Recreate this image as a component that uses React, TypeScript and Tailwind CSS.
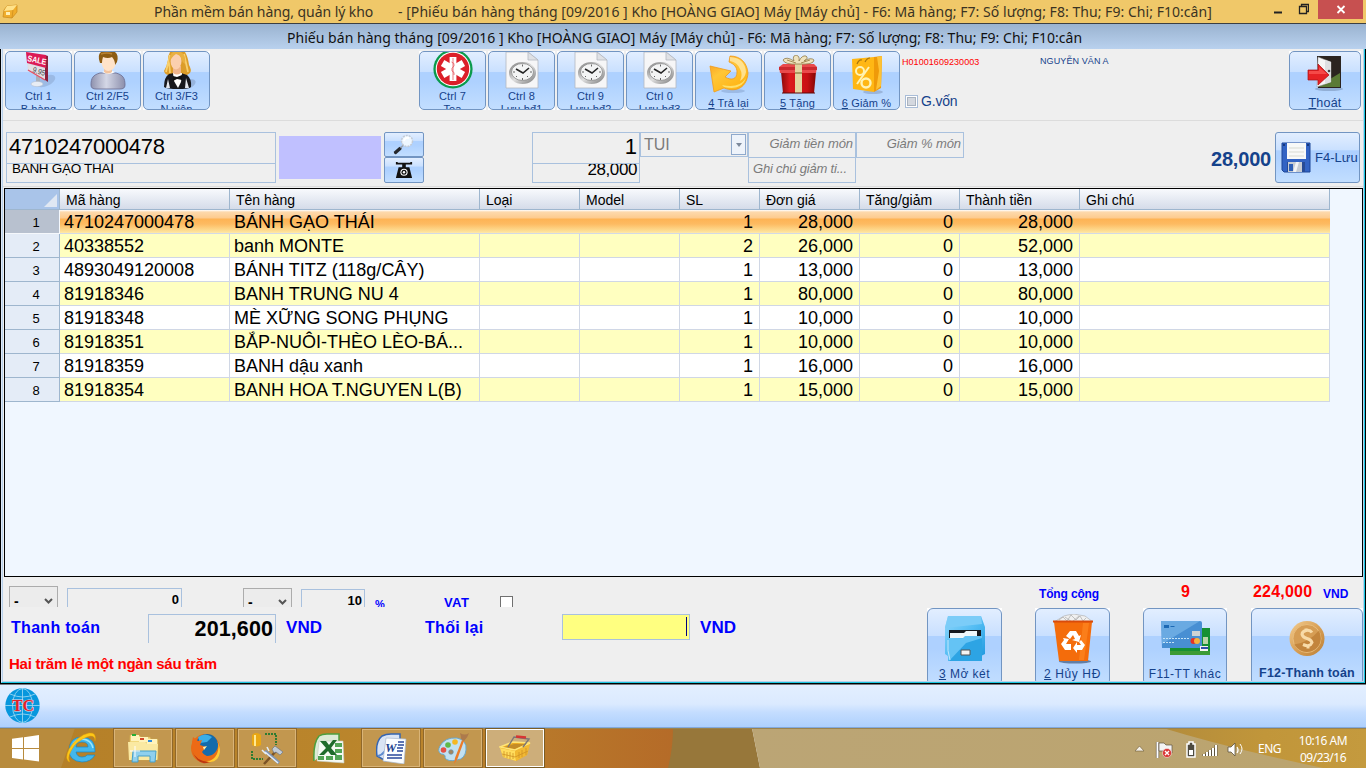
import type { ReactNode } from "react";

type Kids = { children?: ReactNode };

/* ---------- toolbar icons ---------- */

const SaleIcon = () => (
  <svg width="40" height="38" viewBox="0 0 40 38" className="block shrink-0">
    <ellipse cx="27" cy="29" rx="10" ry="5" fill="#7f98bd" opacity=".4" transform="rotate(-25 27 29)" />
    <path d="M17 21h4v11h-4z" fill="#a9b0ba" />
    <ellipse cx="18" cy="32" rx="6" ry="2.600" fill="#e8edf4" stroke="#b7c1d0" strokeWidth=".6" />
    <path d="M7 0l21 4v25L9 19z" fill="#dadde2" />
    <path d="M26 3l3 1v26l-3-2z" fill="#8c1f3c" />
    <path d="M7 0l20 3v13L8 11z" fill="#dc1a55" />
    <text x="8" y="9" fontSize="8.500" fontWeight="bold" fill="#fff" fontFamily="Liberation Sans" textLength="19" lengthAdjust="spacingAndGlyphs" transform="rotate(12 8 9)">SALE</text>
    <path d="M9 12l17 5v11L10 19z" fill="#e3dfe4" />
    <text x="13" y="20" fontSize="8" fill="#444" fontFamily="Liberation Sans" textLength="13" lengthAdjust="spacingAndGlyphs" transform="rotate(18 13 20)">9.95</text>
    <path d="M9 18l17 10" stroke="#e34d63" strokeWidth="1.400" />
  </svg>
);

const CustomerIcon = () => (
  <svg width="40" height="38" viewBox="0 0 40 38" className="block shrink-0">
    <defs>
      <linearGradient id="cust" x1="0" x2="1"><stop offset="0" stopColor="#8f92ae" /><stop offset=".45" stopColor="#d4d7e6" /><stop offset="1" stopColor="#8c8fac" /></linearGradient>
    </defs>
    <path d="M3 33c0-7 2-10 9-12h16c7 2 9 5 9 12 0 3-2 4-5 4H8c-3 0-5-1-5-4z" fill="url(#cust)" stroke="#6f7396" strokeWidth=".9" />
    <path d="M14 20q7-3 13 0-6 4-13 0z" fill="#fff" />
    <path d="M16 15h8v5q-4 3-8 0z" fill="#f2c39e" />
    <path d="M13 5q0-5 7-5t8 5q1 8-3 12-5 4-9 0-3-4-3-12z" fill="#ffe3c9" />
    <path d="M12 11Q9 3 13 0h14q4 3 2 10l-2 3q0-5-3-8-4 2-9 0-1 3-1 6z" fill="#8d5c13" />
    <path d="M13 2q6-2 11 0" stroke="#b98232" strokeWidth="1.500" fill="none" />
  </svg>
);

const StaffIcon = () => (
  <svg width="40" height="38" viewBox="0 0 40 38" className="block shrink-0">
    <ellipse cx="32" cy="32" rx="7" ry="4" fill="#7f98bd" opacity=".5" transform="rotate(-25 32 32)" />
    <path d="M13 0h15q3 5 4 13 3 5 1 8-3 3-8 2H12q-4 0-5-4 3-5 4-11 0-5 2-8z" fill="#dc9d2a" />
    <path d="M13 3l-4 17M27 2l4 18M12 9l1 12" stroke="#f8cf6c" strokeWidth="1.800" fill="none" />
    <path d="M7 35q0-10 5-13l5-1h7l6 2q5 4 4 12-2 2-13 2T7 35z" fill="#17181d" />
    <path d="M16 21h9l-1 9-3 6-4-7z" fill="#fff" />
    <path d="M16 24l4 1 5-2v5l-5-1-4 2z" fill="#111" />
    <path d="M11 27l-2 9h4zM29 26l3 10h-4z" fill="#e5e8ee" />
    <path d="M16 14h8v7q-4 3-8 0z" fill="#efb58c" />
    <ellipse cx="19" cy="9" rx="5.500" ry="8.500" fill="#fbcfae" />
    <path d="M12 12q0-10 4-12h8q5 3 4 12-3-2-4-6-1-3-5-4-5 3-7 10z" fill="#e9b040" />
  </svg>
);

const MedIcon = () => (
  <svg width="40" height="38" viewBox="0 0 40 38" className="block shrink-0">
    <circle cx="20" cy="17" r="19.600" fill="#0a9a4c" />
    <circle cx="20" cy="17" r="17.300" fill="#fff" />
    <circle cx="20" cy="17" r="16.200" fill="#dc1f29" />
    <g fill="#fff">
      <rect x="16.600" y="5" width="6.800" height="24" />
      <rect x="16.600" y="5" width="6.800" height="24" transform="rotate(60 20 17)" />
      <rect x="16.600" y="5" width="6.800" height="24" transform="rotate(120 20 17)" />
    </g>
    <path d="M20 6v22M18.500 10q3.500 1 2.500 4-3 2-2 5 3 1 2 4" stroke="#e2434c" strokeWidth=".7" fill="none" />
  </svg>
);

const ClockDocIcon = () => (
  <svg width="40" height="38" viewBox="0 0 40 38" className="block shrink-0">
    <defs>
      <linearGradient id="cd" x1="0" x2="1" y2="1"><stop offset="0" stopColor="#777" /><stop offset=".5" stopColor="#dedede" /><stop offset="1" stopColor="#777" /></linearGradient>
    </defs>
    <path d="M4 0h22l10 8v28H4z" fill="#f6f6f7" stroke="#b4b9c1" strokeWidth=".8" />
    <path d="M26 0v8h10z" fill="#dfe1e5" stroke="#b4b9c1" strokeWidth=".8" />
    <ellipse cx="20.500" cy="21" rx="13.500" ry="11" fill="url(#cd)" />
    <ellipse cx="20.500" cy="20" rx="11" ry="8.500" fill="#f3f4f4" stroke="#8b8b8b" strokeWidth=".8" />
    <path d="M14 17l7 4 6-5" stroke="#252525" strokeWidth="1.600" fill="none" />
    <path d="M20.500 12.500v2M20.500 26v2M11 20h2M28 20h2M14 25l1-1M26 25l-1-1" stroke="#666" />
  </svg>
);

const ReturnIcon = () => (
  <svg width="42" height="40" viewBox="0 0 42 40" className="block shrink-0">
    <defs>
      <linearGradient id="ret" x1="0" x2=".7" y1="0" y2="1"><stop offset="0" stopColor="#f7941d" /><stop offset=".45" stopColor="#ffc637" /><stop offset="1" stopColor="#ffb310" /></linearGradient>
    </defs>
    <ellipse cx="25" cy="36" rx="12" ry="2" fill="#7794bd" opacity=".4" />
    <path d="M2 11l21 5-6 6c7 4 12 2 12-5 0-5-3-8-8-10l1-6c11 0 17 7 18 17-1 14-11 20-24 15l-10 4z" fill="url(#ret)" stroke="#f19b19" strokeWidth=".8" />
    <path d="M22 2q15 1 16 15-1 6-6 9 3-7 0-12-3-7-10-8z" fill="#fff0b9" opacity=".7" />
    <path d="M14 30q17 4 24-7-4 13-22 9z" fill="#ffe06a" />
  </svg>
);

const GiftIcon = () => (
  <svg width="42" height="40" viewBox="0 0 42 40" className="block shrink-0">
    <defs>
      <linearGradient id="gf" x1="0" x2="1"><stop offset="0" stopColor="#8c0909" /><stop offset=".25" stopColor="#dc1a1d" /><stop offset=".75" stopColor="#c91014" /><stop offset="1" stopColor="#820606" /></linearGradient>
    </defs>
    <path d="M4 17h35l-2 21H6z" fill="url(#gf)" />
    <path d="M2 12l4-3h31l3 3-1 6H3z" fill="#e94a4b" />
    <path d="M2 12h38v3H2z" fill="#cc2a2f" />
    <path d="M18 9h7v29h-7z" fill="#e3d5a0" />
    <path d="M18 17h7v2h-7z" fill="#a99a61" />
    <path d="M21 9Q8 10 6 5q3-4 11 1-2-5 2-6 4 1 3 6 3-6 7-5 3 2-2 5 7-4 10-1 0 5-16 4z" fill="#efe3bd" stroke="#8f7846" strokeWidth=".8" />
    <path d="M10 5l9 3M33 5l-9 3" stroke="#a58d55" />
    <path d="M5 38h33" stroke="#5e0909" />
  </svg>
);

const DiscountIcon = () => (
  <svg width="36" height="40" viewBox="0 0 36 40" className="block shrink-0">
    <ellipse cx="24" cy="37" rx="10" ry="2" fill="#66789a" opacity=".35" />
    <path d="M3 4l22-2v35L4 34z" fill="#ffb714" />
    <path d="M25 2l8-1-1 32-7 4z" fill="#ef9a09" />
    <path d="M28 2l2 14-3 19 5-4 1-30z" fill="#fec234" />
    <path d="M8 9q2-5 5-4M16 7q2-4 5-4" stroke="#a6740f" fill="none" strokeWidth="1.200" />
    <path d="M8 29L20 12" stroke="#fff3b5" strokeWidth="2" />
    <circle cx="11" cy="16" r="4" stroke="#fff3b5" strokeWidth="2" fill="none" />
    <circle cx="17" cy="28" r="4.500" stroke="#fff3b5" strokeWidth="2.400" fill="none" />
  </svg>
);

const ExitIcon = () => (
  <svg width="36" height="36" viewBox="0 0 36 36" className="block shrink-0">
    <ellipse cx="22" cy="33" rx="14" ry="2" fill="#5f7699" opacity=".4" />
    <path d="M10 0h24v32H11z" fill="#2b2420" />
    <path d="M23 23l10-6v14H12z" fill="#5a7a35" />
    <path d="M11 1l13 5v20l-14 5z" fill="#f5f5f5" stroke="#999" strokeWidth=".5" />
    <path d="M18 4l6 2v20l-6 2z" fill="#dedfe2" />
    <circle cx="22" cy="15" r="1.300" fill="#444" />
    <path d="M1 14h10V8l11 11-11 10v-5H1z" fill="#e62225" stroke="#a80e14" strokeWidth=".7" />
    <path d="M2 15h10v-4l8 7H2z" fill="#ff6460" opacity=".6" />
  </svg>
);

const MagnifierIcon = () => (
  <svg width="24" height="22" viewBox="0 0 24 22" className="block shrink-0">
    <path d="M3.500 18.500l4.500-4" stroke="#25282c" strokeWidth="3.200" strokeLinecap="round" />
    <path d="M8.500 14l3-3" stroke="#9aa2ad" strokeWidth="1.600" />
    <circle cx="15" cy="7" r="5.500" fill="#eef7ff" stroke="#c3cbd6" strokeWidth="1.500" strokeDasharray="2 1" />
    <path d="M12 7q1-4 5-3" stroke="#fff" strokeWidth="2" fill="none" />
  </svg>
);

const ScaleIcon = () => (
  <svg width="18" height="18" viewBox="0 0 20 20" className="block shrink-0">
    <path d="M1 1h2v1h14V1h2v3h-7v3h4l3 12H1L4 7h4V4H1z" fill="#111" />
    <circle cx="10" cy="12.500" r="4" fill="#fff" />
    <circle cx="10" cy="12.500" r="2.800" fill="#111" />
    <circle cx="10" cy="12.500" r="1.300" fill="#fff" />
  </svg>
);

const FloppyIcon = () => (
  <svg width="30" height="31" viewBox="0 0 30 31" className="block shrink-0">
    <path d="M1 1h28v29H3l-2-2z" fill="#3263c4" stroke="#1d4798" />
    <path d="M6 1h19v16H6z" fill="#f8f9f8" />
    <path d="M8 6h15M8 10h15M8 14h15" stroke="#d9dbd3" />
    <path d="M6 20h18v10H6z" fill="#274b96" />
    <path d="M7 20h14v10H7z" fill="#c7ccd3" />
    <path d="M8 22h4v7H8z" fill="#2e5fb7" />
    <path d="M15 20h3l-3 10h-3z" fill="#f3f4f6" />
    <path d="M2 3h2M26 3h2" stroke="#16387f" strokeWidth="2" />
  </svg>
);

/* ---------- payment icons ---------- */

const SafeIcon = () => (
  <svg width="42" height="47" viewBox="0 0 42 47" className="block shrink-0">
    <defs>
      <linearGradient id="sf" x1="0" x2="1" y2="1"><stop offset="0" stopColor="#8fd6fb" /><stop offset=".5" stopColor="#52bcf3" /><stop offset="1" stopColor="#1d97de" /></linearGradient>
    </defs>
    <path d="M4 1h33l4 11v27l-4 2v5H4v-5l-3-2V12z" fill="url(#sf)" />
    <path d="M4 1h33l1 8-37 4z" fill="#7bccf8" />
    <path d="M5 15h32v8H5z" fill="#151a20" />
    <path d="M6 18h14l2-2h11v7H6z" fill="#edf7fc" />
    <path d="M3 24h15l3-3h17v25H5q-3-9-2-22z" fill="#64c3f5" />
    <path d="M5 46l17-18 16-5v23z" fill="#2da4e4" />
    <path d="M4 25q-1 11 2 20" stroke="#bfe7fd" fill="none" />
    <path d="M17 35h9v5h-9z" fill="#f5f5f4" stroke="#555" />
  </svg>
);

const TrashIcon = () => (
  <svg width="42" height="50" viewBox="0 0 42 50" className="block shrink-0">
    <ellipse cx="23" cy="47.500" rx="16" ry="2" fill="#40587d" opacity=".7" />
    <path d="M2 8l5-3 5-3 4-1 6-1 5 1 6 1 4 3 4 3z" fill="#f0f0f0" stroke="#aaa" strokeWidth=".6" />
    <path d="M7 6l4-3 4 4 4-6 5 5 4-4 3 5 3-3M13 3l7 5 7-6" stroke="#a9a9a9" strokeWidth=".7" fill="none" />
    <path d="M2 8h38l-4 39H7z" fill="#f46c0b" />
    <path d="M1 6.500h40v2H1z" fill="#d94b0b" />
    <path d="M31 9h6l-5 37h-5z" fill="#ff8b24" opacity=".6" />
    <g fill="#fff" transform="translate(0 1)">
      <path d="M14 21l4-5h6l3 5 2-1-2 7-7-2 3-1-2-4-3 4z" />
      <path d="M11 23l6 1-3 5h5v6h-6l-4-6 3-4z" />
      <path d="M29 25l4 5-3 5h-5v3l-4-5 4-6v3h4l-2-3z" />
    </g>
  </svg>
);

const CardsIcon = () => (
  <svg width="50" height="37" viewBox="0 0 50 37" className="block shrink-0">
    <path d="M10 8h40v27H10z" fill="#169033" />
    <path d="M10 31h40v4H10z" fill="#3c9b35" />
    <path d="M1 1h39q2 0 2 2v23q0 2-2 2H2z" fill="#488fd3" />
    <path d="M1 1h39L2 24z" fill="#7db9e9" opacity=".65" />
    <path d="M4 5h5v3H4zM10.500 6h4v1h-4z" fill="#1d69b4" />
    <path d="M3 18.500h27M3 22.500h12" stroke="#c5e3f7" strokeDasharray="2 1" />
    <path d="M32 11h8v5h-8z" fill="#cfd3d3" />
    <circle cx="33.500" cy="21" r="3" fill="#e33227" /><circle cx="37" cy="21" r="3" fill="#f7b13e" />
    <path d="M43 17h5v7h-5z" fill="#b9d5a7" />
    <path d="M40 26h8v5h-8z" fill="#f5f5f1" /><path d="M41 27h7v2h-7z" fill="#3050aa" />
  </svg>
);

const CoinIcon = () => (
  <svg width="36" height="37" viewBox="0 0 36 36" className="block shrink-0">
    <defs>
      <linearGradient id="coin" x1="0" x2="1" y2="1"><stop offset="0" stopColor="#f3cd90" /><stop offset=".5" stopColor="#d9a056" /><stop offset="1" stopColor="#bb7f35" /></linearGradient>
    </defs>
    <circle cx="18" cy="18" r="17.500" fill="url(#coin)" />
    <circle cx="18" cy="18" r="14" fill="#d69d54" stroke="#ecc384" strokeWidth=".8" />
    <path d="M5 24Q20 22 30 10q5 12-4 19-12 7-21-5z" fill="#bc7e34" opacity=".75" />
    <path d="M23 12q-2-3-6-2-4 1-4 4 1 3 5 4t5 4q-2 5-9 2M17 8v3M19 25v3" stroke="#f8dba8" strokeWidth="3" fill="none" />
  </svg>
);

const GlobeLogo = () => (
  <svg width="35" height="35" viewBox="0 0 35 35" className="block">
    <circle cx="17.500" cy="17.500" r="17.200" fill="#0797dd" />
    <g stroke="#a6ddf5" strokeWidth=".8" fill="none">
      <ellipse cx="17.500" cy="17.500" rx="10" ry="17" />
      <path d="M17.500 0v35M5 6q13 6 25 0M5 29q13-6 25 0M0 17.500h35" />
    </g>
    <text x="7" y="23" fontSize="16" fontWeight="bold" fontFamily="Liberation Serif" fill="#e32028" stroke="#ead8e4" strokeWidth="1" paintOrder="stroke" textLength="22">TC</text>
  </svg>
);

/* ---------- taskbar icons ---------- */

const WindowsIcon = () => (
  <svg width="28" height="27" viewBox="0 0 28 27" className="block" fill="#fff">
    <path d="M0 3.800l11-1.500V13H0zM12 2.200L27 0v13H12zM0 14h11v10.500L0 23zM12 14h15v12.500L12 24.600z" />
  </svg>
);

const IeIcon = () => (
  <svg width="32" height="32" viewBox="0 0 32 32" className="block">
    <path d="M10 15h12q0-5-6-5t-6 5zm0 5q1 5 6 5 4 0 5-2h8q-4 7-13 7Q3 29 3 18 4 5 16 5q14 1 13 15z" fill="#43b7ec" stroke="#1887c5" strokeWidth=".7" />
    <path d="M6 14Q9 7 17 7q8 1 10 9" stroke="#9ce7fc" strokeWidth="1.500" fill="none" />
    <path d="M4 30Q-2 28 3 17 12 3 23 1q8-1 6 8 0-7-8-4Q10 9 5 19q-4 7-1 11z" fill="#ffc817" stroke="#da9b08" strokeWidth=".5" />
  </svg>
);

const ExplorerIcon = () => (
  <svg width="32" height="30" viewBox="0 0 32 30" className="block">
    <path d="M3 2h9l2 2h9l1 2h7v21H2z" fill="#f1d87c" stroke="#caa44b" strokeWidth=".7" />
    <path d="M4 2h8v6H4zM12 4h9v5h-9zM20 6h10v5H20z" fill="#fff3bb" />
    <path d="M5 1h4v2H5z" fill="#27ad35" /><path d="M13 5h4v2h-4z" fill="#d54a2b" /><path d="M21 7h4v2h-4z" fill="#2f8bdc" />
    <path d="M1 9h17l2 2h11l-1 16H2z" fill="#fae9a2" />
    <path d="M5 29l1-11h23l-1 11h-5v-6H11v6z" fill="#8fd0ee" stroke="#479fc8" />
    <path d="M8 13v11M3 18h10" stroke="#fff" />
  </svg>
);

const FirefoxIcon = () => (
  <svg width="31" height="31" viewBox="0 0 31 31" className="block">
    <circle cx="15.500" cy="15.500" r="14.500" fill="#e86d17" />
    <circle cx="17" cy="12" r="11" fill="#146bab" />
    <path d="M8 4q7-5 14 0l-5 5-7 1z" fill="#39aee8" />
    <path d="M2 9l1-5 5 4 4-1-2 5 6 2-4 5q3 5 9 4-5 6-13 1-7-7-6-15z" fill="#ed6a16" />
    <path d="M27 8q3 5 0 13-4 8-12 7 13 4 15-9 0-7-3-11z" fill="#ffcb35" />
    <path d="M2 18q4 10 17 11-10 5-17-11z" fill="#bd3711" />
    <path d="M13 14l4-1-3 4z" fill="#fff1ab" />
  </svg>
);

const DbToolsIcon = () => (
  <svg width="32" height="33" viewBox="0 0 32 33" className="block">
    <path d="M1 3q4-4 9 0v10q-5 3-9 0z" fill="#e9a713" />
    <path d="M4 3v11" stroke="#ffe891" strokeWidth="2" />
    <path d="M14 2h11v11M1 19v8h11" stroke="#2e7c32" strokeWidth="2" fill="none" strokeDasharray="2 1" />
    <path d="M13 32l13-14" stroke="#7b5326" strokeWidth="2.500" />
    <path d="M21 17l3-3 8 6-3 3-4-3-2 1z" fill="#c3cbd4" stroke="#606d80" strokeWidth=".6" />
    <path d="M14 19l14 12" stroke="#7e95b5" strokeWidth="3" /><path d="M11 18l4 4M16 15l2 4M14 20l13 11" stroke="#e5edf6" strokeWidth="1.600" />
  </svg>
);

const ExcelIcon = () => (
  <svg width="32" height="31" viewBox="0 0 32 31" className="block">
    <path d="M1 28Q0 10 6 3q3-2 8-2h12v9" fill="#dcebd5" stroke="#4d9e3c" strokeWidth="1.500" />
    <path d="M6 8h24l1 22-27-2z" fill="#f6faf4" stroke="#c3cbbd" strokeWidth=".6" />
    <path d="M7 8h6l3 4 4-5h4l-6 8 6 7h-6l-3-4-4 4H6l7-7z" fill="#1f6b2b" />
    <path d="M22 10h7v4h-7zM22 16h7v4h-7zM5 23h6v4H5zM13 23h7v4h-7zM22 22h7v5h-7z" fill="#52a455" />
  </svg>
);

const WordIcon = () => (
  <svg width="31" height="31" viewBox="0 0 31 31" className="block">
    <path d="M1 23Q-1 9 6 3q4-2 9-2h9v9L10 28z" fill="#d9e4f4" stroke="#3565b1" strokeWidth="1.500" />
    <path d="M2 23q8-2 10-13" stroke="#5d8bd0" strokeWidth="2" fill="none" />
    <path d="M10 5l20 1-2 25-21-3z" fill="#fafdff" stroke="#a7b7cd" strokeWidth=".7" />
    <path d="M22 9h6M22 12h6M21 15h6M21 18h6M11 22h15M11 25h15" stroke="#29479b" strokeWidth="1.600" />
    <text x="9" y="19" fill="#24448f" fontSize="13" fontWeight="bold" fontStyle="italic" fontFamily="Liberation Serif">W</text>
  </svg>
);

const PaintIcon = () => (
  <svg width="33" height="32" viewBox="0 0 33 32" className="block">
    <path d="M3 14Q8 5 20 6q10 2 9 12-1 9-9 10-9 2-12-2 1-4-4-4-4-3-1-8z" fill="#c2e1f1" stroke="#6ba8ca" />
    <circle cx="6.500" cy="18" r="2.800" fill="#e45145" /><circle cx="11" cy="13" r="2.800" fill="#60b847" /><circle cx="18" cy="10" r="2.800" fill="#f5b823" /><circle cx="14" cy="20" r="2.300" fill="#a28762" stroke="#6a91a7" strokeWidth=".7" />
    <path d="M25 8l2 1-7 19-3 4 1-6z" fill="#ec7c2a" />
    <path d="M23 1q5 3 9 0-1 4-5 8l-3-2q0-3-1-6z" fill="#ad7a4c" />
  </svg>
);

const BasketIcon = ({ size }: { size: number }) => (
  <svg width={size} height={size} viewBox="0 0 32 28" className="block">
    <path d="M1 13l13-5 17 1-3 12-11 6L4 23z" fill="#eba921" />
    <path d="M3 14l12-4 13 0-12 5z" fill="#c48c28" />
    <path d="M1 14l15 3 1 10-13-4z" fill="#ffdc5c" /><path d="M16 17l15-7-3 11-11 6z" fill="#f2b932" />
    <path d="M1 13l13-5 17 1-15 7z" fill="none" stroke="#ffe577" strokeWidth="1.600" />
    <path d="M5 17v6M8 18v6M11 18v7M14 19v6M20 18v6M23 16v7M27 14v7M3 20l13 3 13-6" stroke="#cf9224" strokeWidth=".8" fill="none" />
    <path d="M9 13l6-10 15 2-6 8" fill="none" stroke="#7b7777" strokeWidth="1.400" /><path d="M17 2.500l10 1" stroke="#d63634" strokeWidth="2.500" />
  </svg>
);

const CrateIcon = () => (
  <svg width="16" height="15" viewBox="0 0 16 15" className="block">
    <path d="M5 2l10-1 0 7-5 6-9-1 1-7z" fill="#f0ad2c" stroke="#c98a1d" strokeWidth=".7" />
    <path d="M5 2l10-1-4 5-9 1z" fill="#ffe28a" />
    <path d="M4 8h4v3H4z" fill="#fff0b5" /><path d="M11 6l-1 8" stroke="#cf8f20" strokeWidth=".8" />
  </svg>
);

const Chevron = () => (
  <svg width="9" height="6" viewBox="0 0 9 6" className="block shrink-0"><path d="M1 1l3.500 3.500L8 1" fill="none" stroke="#555" strokeWidth="2" /></svg>
);

/* ---------- building blocks ---------- */

const Face = "border border-[#7295c2] bg-[linear-gradient(180deg,#e2eeff_0%,#c9e0ff_35%,#aed1ff_36%,#aed1ff_52%,#c2deff_100%)] text-[#15428b]";

const ToolButton = ({ icon, first, second }: { icon: ReactNode; first: string; second: string }) => (
  <div className="h-[59px] w-[67px] shrink-0 bg-white">
    <div className={`flex h-full flex-col items-center overflow-hidden rounded-[5px] ${Face}`}>
      {icon}
      <div className="shrink-0 text-center text-[11px] leading-[13px] tracking-[0.1px] whitespace-nowrap">{first}<br />{second}</div>
    </div>
  </div>
);

const AccelButton = ({ icon, accel, label }: { icon: ReactNode; accel: string; label: string }) => (
  <div className="h-[59px] w-[67px] shrink-0 bg-white">
    <div className={`flex h-full flex-col items-center overflow-hidden rounded-[5px] pt-[3px] ${Face}`}>
      {icon}
      <div className="mt-[2px] shrink-0 text-[11px] leading-[13px] tracking-[0.15px] whitespace-nowrap"><u>{accel}</u>{label}</div>
    </div>
  </div>
);

const PayButton = ({ className, children }: Kids & { className: string }) => (
  <div className={`h-[73px] shrink-0 overflow-hidden bg-white ${className}`}>
    <div className={`flex h-[78px] flex-col items-center overflow-hidden rounded-[6px] text-[12px] leading-[14px] whitespace-nowrap ${Face}`}>{children}</div>
  </div>
);

const TaskButton = ({ children, active }: Kids & { active?: boolean }) => (
  <div className={`flex h-[40px] w-[60px] shrink-0 items-center justify-center border ${active ? "border-[#7a5c25]" : "border-[#90682a]"}`}>
    <div className={`flex h-full w-full items-center justify-center border ${active ? "border-white bg-[#cdae7a]" : "border-[#d9b478] bg-[#c2974f]"}`}>{children}</div>
  </div>
);

const GRID = "grid grid-cols-[55px_170px_250px_100px_100px_80px_100px_100px_120px_250px]";
const HEADERS = ["Mã hàng", "Tên hàng", "Loại", "Model", "SL", "Đơn giá", "Tăng/giảm", "Thành tiền", "Ghi chú"];
const ROWS = [
  ["4710247000478", "BÁNH GẠO THÁI", "1", "28,000", "28,000"],
  ["40338552", "banh MONTE", "2", "26,000", "52,000"],
  ["4893049120008", "BÁNH TITZ (118g/CÂY)", "1", "13,000", "13,000"],
  ["81918346", "BANH TRUNG NU 4", "1", "80,000", "80,000"],
  ["81918348", "MÈ XỮNG SONG PHỤNG", "1", "10,000", "10,000"],
  ["81918351", "BẮP-NUÔI-THÈO LÈO-BÁ...", "1", "10,000", "10,000"],
  ["81918359", "BANH dậu xanh", "1", "16,000", "16,000"],
  ["81918354", "BANH HOA T.NGUYEN L(B)", "1", "15,000", "15,000"],
];

const Row = ({ row, index }: { row: string[]; index: number }) => {
  const selected = index === 0;
  const band = selected
    ? "bg-[linear-gradient(180deg,#fff_0px,#fdd9ac_2px,#fdcb8e_8px,#feb354_9px,#fdbb62_14px,#fee39b_22px,#fff0c0_24px)]"
    : index % 2 ? "bg-[#ffffc0]" : "bg-white";
  const cell = `h-[24px] overflow-hidden border-b whitespace-nowrap ${selected ? "border-[#d3dae6]" : "border-r border-[#d0d7e5]"}`;
  const num = `${cell} text-right ${selected ? "pr-[7px]" : "pr-[6px]"}`;
  return (
    <div className={`${GRID} h-[24px] text-[18px] leading-[25px]`}>
      <div className={`h-[24px] border-r border-b text-center text-[13px] leading-[25px] ${selected ? "border-[#f5f8fc] bg-[#b8c1cf]" : "border-[#9eb6ce] bg-[#e4ecf7]"} pr-[5px] pl-[13px]`}>{index + 1}</div>
      <div className={`col-span-9 grid h-[24px] grid-cols-subgrid ${band}`}>
        <div className={`${cell} pl-[4px]`}>{row[0]}</div>
        <div className={`${cell} pl-[4px]`}>{row[1]}</div>
        <div className={cell} />
        <div className={cell} />
        <div className={num}>{row[2]}</div>
        <div className={num}>{row[3]}</div>
        <div className={num}>0</div>
        <div className={num}>{row[4]}</div>
        <div className={cell} />
      </div>
    </div>
  );
};

const TitleBar = () => (
  <header className="flex h-[24px] items-start border-b border-[#3b3f42] bg-[#f0c869] font-['Noto_Sans',sans-serif] text-[#3a3323]">
    <div className="mt-[4px] ml-[2px]"><CrateIcon /></div>
    <div className="ml-[136px] w-[220px] text-[14px] leading-[24px] tracking-[-0.07px] whitespace-nowrap">Phần mềm bán hàng, quản lý kho</div>
    <div className="ml-[24px] w-[815px] text-[14px] leading-[24px] tracking-[0.04px] whitespace-nowrap">- [Phiếu bán hàng tháng [09/2016 ] Kho [HOÀNG GIAO] Máy [Máy chủ] - F6: Mã hàng; F7: Số lượng; F8: Thu; F9: Chi; F10:cân]</div>
    <svg width="36" height="19" viewBox="0 0 36 19" className="ml-[60px] block shrink-0" fill="none" stroke="#222" strokeWidth="2">
      <path d="M1 12.500h8" /><path d="M26.500 6.500h7v7h-7zM28.500 6V4.500h7v7H34" strokeWidth="1.300" />
    </svg>
    <div className="ml-[9px] flex h-[19px] w-[45px] shrink-0 items-center justify-center bg-[#c75050]">
      <svg width="10" height="9" viewBox="0 0 10 9"><path d="M1.500 1l7 7M8.500 1l-7 7" stroke="#fff" strokeWidth="1.800" /></svg>
    </div>
  </header>
);

const Toolbar = () => (
  <div className="flex h-[72px] items-start border-b border-[#dcdcdc] pt-[2px] pl-[2px]">
    <div className="flex gap-[2px]">
      <ToolButton icon={<SaleIcon />} first="Ctrl 1" second="B.hàng" />
      <ToolButton icon={<CustomerIcon />} first="Ctrl 2/F5" second="K.hàng" />
      <ToolButton icon={<StaffIcon />} first="Ctrl 3/F3" second="N.viên" />
    </div>
    <div className="ml-[209px] flex gap-[2px]">
      <ToolButton icon={<MedIcon />} first="Ctrl 7" second="Toa" />
      <ToolButton icon={<ClockDocIcon />} first="Ctrl 8" second="Lưu hđ1" />
      <ToolButton icon={<ClockDocIcon />} first="Ctrl 9" second="Lưu hđ2" />
      <ToolButton icon={<ClockDocIcon />} first="Ctrl 0" second="Lưu hđ3" />
      <AccelButton icon={<ReturnIcon />} accel="4" label=" Trả lại" />
      <AccelButton icon={<GiftIcon />} accel="5" label=" Tặng" />
      <AccelButton icon={<DiscountIcon />} accel="6" label=" Giảm %" />
    </div>
    <div className="ml-[2px] flex w-[138px] flex-col">
      <div className="mt-[5px] text-[9px] leading-[12px] tracking-[0.05px] text-[#f00]">H01001609230003</div>
      <div className="mt-[25px] ml-[3px] flex items-center">
        <div className="h-[13px] w-[13px] border border-[#a9bdd8] bg-white p-px"><div className="h-full w-full border border-[#aab3bf] bg-[#d4d8df]" /></div>
        <span className="ml-[3px] text-[14px] leading-[16px] tracking-[-0.2px] text-[#15428b]">G.vốn</span>
      </div>
    </div>
    <div className="mt-[4px] w-[249px] text-[9px] leading-[12px] tracking-[0.1px] text-[#15428b]">NGUYỄN VĂN A</div>
    <div className="h-[59px] w-[72px] bg-white">
      <div className={`flex h-full flex-col items-center rounded-[5px] pt-[4px] ${Face}`}>
        <ExitIcon />
        <div className="mt-[4px] text-[12.5px] leading-[14px] tracking-[0.2px]"><u>T</u>hoát</div>
      </div>
    </div>
  </div>
);

const box = "border border-[#a9c1de]";

const EntryRow = () => (
  <div className="flex h-[66px] items-start border-b border-[#dcdcdc] pt-[11px] pl-[3px]">
    <div className={`flex h-[51px] w-[270px] flex-col ${box}`}>
      <div className="h-[31px] border-b border-[#a9c1de] pl-[2px] text-[22px] leading-[28px] tracking-[-0.25px]">4710247000478</div>
      <div className="h-[18px] overflow-hidden pl-[5px]"><div className="-mt-[4px] text-[13.5px] leading-[17px] tracking-[-0.3px]">BÁNH GẠO THÁI</div></div>
    </div>
    <div className="mt-[4px] ml-[3px] h-[43px] w-[102px] bg-[#c0c0ff]" />
    <div className="ml-[3px] flex flex-col">
      <div className={`flex h-[25px] w-[40px] items-center justify-center rounded-[2px] ${Face}`}><MagnifierIcon /></div>
      <div className={`flex h-[26px] w-[40px] items-center justify-center rounded-[2px] ${Face}`}><ScaleIcon /></div>
    </div>
    <div className={`ml-[108px] flex h-[51px] w-[108px] flex-col text-right ${box}`}>
      <div className="h-[31px] border-b border-[#a9c1de] pr-[2px] text-[22px] leading-[28px]">1</div>
      <div className="h-[18px] overflow-hidden pr-[2px]"><div className="-mt-[4px] text-[17px] leading-[20px] tracking-[-0.4px]">28,000</div></div>
    </div>
    <div className={`flex h-[25px] w-[108px] items-center justify-between pr-px pl-[3px] ${box}`}>
      <span className="text-[16px] leading-[24px] text-[#7b7b7b]">TUI</span>
      <div className="flex h-[21px] w-[15px] items-center justify-center border border-[#8fa9cc] bg-[#eef3fa]">
        <svg width="6" height="4" viewBox="0 0 6 4"><path d="M0 0h6L3 4z" fill="#7d899b" /></svg>
      </div>
    </div>
    <div className="flex flex-col text-[13px] tracking-[-0.08px] text-[#7b7b7b] italic">
      <div className="flex">
        <div className={`h-[26px] w-[108px] pr-[2px] text-right leading-[22px] ${box}`}>Giảm tiền món</div>
        <div className={`h-[26px] w-[108px] pr-[2px] text-right leading-[22px] ${box}`}>Giảm % món</div>
      </div>
      <div className={`-mt-px h-[26px] w-[108px] pl-[4px] leading-[21px] tracking-[-0.2px] whitespace-nowrap ${box}`}>Ghi chú giảm ti...</div>
    </div>
    <div className="mt-[16px] w-[307px] text-right text-[20px] leading-[23px] font-bold tracking-[-0.2px] text-[#15428b]">28,000</div>
    <div className={`ml-[4px] flex h-[51px] w-[85px] items-center rounded-[3px] pl-[5px] ${Face}`}>
      <FloppyIcon />
      <span className="ml-[4px] pt-px text-[13px] whitespace-nowrap">F4-Lưu</span>
    </div>
  </div>
);

const ItemTable = () => (
  <div className="ml-px h-[389px] w-[1359px] shrink-0 border border-black bg-[#f0f7ff]">
    <div className={`${GRID} h-[21px] text-[14px] leading-[22px]`}>
      <div className="flex h-[21px] items-end justify-end border-r border-b border-[#9eb6ce] bg-[#a9c4e9] p-[2px]">
        <svg width="13" height="13" viewBox="0 0 13 13"><path d="M13 0v13H0z" fill="#e0e8f3" /></svg>
      </div>
      {HEADERS.map((h) => (
        <div key={h} className="h-[21px] border-r border-b border-[#9eb6ce] bg-linear-to-b from-[#f8fafd] to-[#d5dce9] pl-[6px] whitespace-nowrap">{h}</div>
      ))}
    </div>
    {ROWS.map((r, i) => <Row key={r[0]} row={r} index={i} />)}
  </div>
);

const select = "flex w-[49px] justify-between border border-b-0 border-[#acacac] bg-[#ececec] pr-[4px] pl-[4px]";

const Totals = () => (
  <div className="flex h-[104px] shrink-0 justify-between pt-px">
    <div className="flex w-[760px] flex-col">
      <div className="flex h-[29px] items-end overflow-hidden pl-[6px] text-[14px] font-bold">
        <div className={`${select} h-[21px] items-center pt-[7px]`}><span className="leading-[14px]">-</span><Chevron /></div>
        <div className="ml-[9px] h-[19px] w-[115px] border border-b-0 border-[#a9c1de] pr-[2px] text-right text-[13px] leading-[22px]">0</div>
        <div className={`${select} ml-[61px] h-[19px] items-center pt-[8px]`}><span className="leading-[12px]">-</span><Chevron /></div>
        <div className="ml-[9px] h-[18px] w-[64px] border border-b-0 border-[#a9c1de] pr-[2px] text-right text-[13px] leading-[22px]">10</div>
        <div className="ml-[10px] h-[11px] w-[20px] overflow-hidden text-[11px] leading-[16px] text-[#00f]">%</div>
        <div className="ml-[49px] h-[12px] w-[56px] overflow-hidden text-[13px] leading-[15px] tracking-[0.4px] text-[#00f]">VAT</div>
        <div className="h-[11px] w-[13px] border border-b-0 border-[#707070] bg-white" />
      </div>
      <div className="flex h-[43px] items-start pt-[7px] pl-[8px] text-[16px] leading-[27px] font-bold tracking-[0.3px] text-[#00f]">
        <div className="w-[137px]">Thanh toán</div>
        <div className="h-[29px] w-[128px] border border-b-0 border-[#a9c1de] pr-[2px] text-right text-[21.500px] leading-[28px] tracking-[0.1px] text-black">201,600</div>
        <div className="ml-[10px] w-[139px] text-[17px] tracking-[0.1px]">VND</div>
        <div className="w-[137px]">Thối lại</div>
        <div className="flex h-[26px] w-[128px] justify-end border border-[#a9c1de] bg-[#ffff80] py-[2px] pr-[2px]"><div className="h-[19px] w-px bg-[#000080]" /></div>
        <div className="ml-[10px] text-[17px] tracking-[0.1px]">VND</div>
      </div>
      <div className="mt-[4px] pl-[6px] text-[15px] leading-[20px] font-bold tracking-[-0.25px] text-[#f00]">Hai trăm lẻ một ngàn sáu trăm</div>
    </div>
    <div className="flex w-[436px] flex-col">
      <div className="flex h-[30px] items-start pt-[3px] pl-[112px] text-[12px] leading-[26px] font-bold text-[#00f]">
        <div className="w-[142px] tracking-[-0.15px]">Tổng cộng</div>
        <div className="w-[72px] text-[16px] leading-[22px] text-[#f00]">9</div>
        <div className="w-[70px] text-[16px] leading-[22px] tracking-[0.2px] text-[#f00]">224,000</div>
        <div>VND</div>
      </div>
      <div className="flex">
        <PayButton className="w-[75px]"><div className="mt-[6px]"><SafeIcon /></div><div className="mt-[5px] tracking-[0.5px]"><u>3</u> Mở két</div></PayButton>
        <PayButton className="ml-[33px] w-[75px]"><div className="mt-[5px]"><TrashIcon /></div><div className="mt-[3px] tracking-[0.6px]"><u>2</u> Hủy HĐ</div></PayButton>
        <PayButton className="ml-[33px] w-[84px]"><div className="mt-[11px]"><CardsIcon /></div><div className="mt-[10px] tracking-[0.5px]">F11-TT khác</div></PayButton>
        <PayButton className="ml-[24px] w-[112px]"><div className="mt-[11px]"><CoinIcon /></div><div className="mt-[9px] text-[12.5px] font-bold tracking-[0.2px]">F12-Thanh toán</div></PayButton>
      </div>
    </div>
  </div>
);

const StatusBar = () => (
  <div className="h-[44px] border-t border-b border-t-[#777b80] border-b-[#83a9dc] bg-[linear-gradient(180deg,#e3efff_0%,#dbeaff_45%,#c4ddff_65%,#aed0fd_100%)] pt-[3px] pl-[5px]">
    <GlobeLogo />
  </div>
);

const TrayIcons = () => (
  <svg width="104" height="20" viewBox="0 0 104 20" className="block shrink-0">
    <path d="M0 11l4.500-5L9 11z" fill="#f5f1e8" stroke="#6b5a3b" strokeWidth=".6" />
    <path d="M22.500 2v16" stroke="#5e5543" strokeWidth="3.200" /><path d="M22.500 2v16" stroke="#fff" strokeWidth="2" /><path d="M24 3h5l2 2h6v8h-6l-2-2h-5z" fill="#f4f4f4" stroke="#5e5543" strokeWidth=".7" />
    <circle cx="32" cy="13" r="4.500" fill="#d93434" stroke="#fff" strokeWidth=".5" /><path d="M30 11l4 4M34 11l-4 4" stroke="#fff" strokeWidth="1.400" />
    <path d="M54 2h4v2h2v13h-8V4h2z" fill="#4e4b40" stroke="#fff" strokeWidth="1.500" /><path d="M54 10h4v5h-4z" fill="#fff" />
    <path d="M69 16v-2M72 16v-4M75 16v-6M78 16V8M81 16V5" stroke="#5d533e" strokeWidth="3" /><path d="M69 16v-2M72 16v-4M75 16v-6M78 16V8M81 16V5" stroke="#fff" strokeWidth="2" />
    <path d="M93 7h3l4-4v13l-4-4h-3z" fill="#fff" stroke="#5d533e" strokeWidth=".8" /><path d="M102 7q2 3 0 6" fill="none" stroke="#fff" strokeWidth="1.300" />
  </svg>
);

const Taskbar = () => (
  <div className="relative h-[40px] w-[1366px] overflow-hidden">
    <svg width="1366" height="40" viewBox="0 0 1366 40" className="absolute inset-0 block">
      <defs>
        <linearGradient id="tb" x1="0" x2="1"><stop offset="0" stopColor="#b47f28" /><stop offset=".6" stopColor="#bb862c" /><stop offset="1" stopColor="#b56b28" /></linearGradient>
        <linearGradient id="tc" x1="0" x2="1"><stop offset="0" stopColor="#bba575" /><stop offset="1" stopColor="#bba46e" /></linearGradient>
        <linearGradient id="td" x1="0" x2="1"><stop offset="0" stopColor="#b38c3c" /><stop offset=".5" stopColor="#c1963a" /><stop offset="1" stopColor="#c49a3e" /></linearGradient>
      </defs>
      <path d="M0 0h674v40H0z" fill="url(#tb)" />
      <path d="M0 0h75L61 40H0z" fill="#b88b3d" />
      <path d="M673 0h79l8 40h-92q5-20 5-40z" fill="#97773a" />
      <path d="M752 0h614v40H760z" fill="url(#tc)" />
      <path d="M1163 0q65 20 160 40h43V0z" fill="url(#td)" />
      <path d="M0 .5h1366" stroke="#9a834f" />
    </svg>
    <div className="relative flex h-full items-center font-['Noto_Sans',sans-serif] text-white">
      <div className="ml-[12px] w-[54px]"><WindowsIcon /></div>
      <div className="w-[47px]"><IeIcon /></div>
      <TaskButton><ExplorerIcon /></TaskButton>
      <div className="w-[2px]" />
      <TaskButton><FirefoxIcon /></TaskButton>
      <div className="w-[2px]" />
      <TaskButton><DbToolsIcon /></TaskButton>
      <div className="ml-[16px] w-[48px]"><ExcelIcon /></div>
      <TaskButton><WordIcon /></TaskButton>
      <div className="w-[2px]" />
      <TaskButton><PaintIcon /></TaskButton>
      <div className="w-[2px]" />
      <TaskButton active><BasketIcon size={32} /></TaskButton>
      <div className="ml-[590px] pt-[3px]"><TrayIcons /></div>
      <svg width="8" height="14" viewBox="0 0 8 14" className="shrink-0" fill="none" stroke="#fff"><path d="M1 3q4 5 0 10" /></svg>
      <div className="ml-[11px] w-[30px] pt-[2px] text-[12px] tracking-[-0.5px]">ENG</div>
      <div className="w-[70px] pt-[2px] text-center text-[12px] leading-[17px] tracking-[-0.5px] whitespace-nowrap">10:16 AM<br />09/23/16</div>
    </div>
  </div>
);

export default function App() {
  return (
    <div className="flex h-[768px] w-[1366px] flex-col overflow-hidden bg-[#efefef] font-['Liberation_Sans',sans-serif] text-black">
      <TitleBar />
      <div className="h-[25px] bg-linear-to-b from-[#9ab3d0] to-[#b9d1ee] pl-[287px] font-['Noto_Sans',sans-serif] text-[14px] leading-[28px] tracking-[0.03px] whitespace-nowrap text-[#111]">Phiếu bán hàng tháng [09/2016 ] Kho [HOÀNG GIAO] Máy [Máy chủ] - F6: Mã hàng; F7: Số lượng; F8: Thu; F9: Chi; F10:cân</div>
      <div className="flex h-[635px] border-b border-black">
        <div className="w-px shrink-0 bg-black" />
        <div className="flex w-[1364px] flex-col border-r border-b border-l border-r-[#19c6e0] border-b-[#19c6e0] border-l-[#dbe8f8]">
          <div className="flex h-[633px] flex-col border-r border-b border-l border-[#b9d1ea] bg-[#efefef]">
            <Toolbar />
            <EntryRow />
            <div className="h-px shrink-0" />
            <ItemTable />
            <Totals />
          </div>
        </div>
        <div className="w-px shrink-0 bg-black" />
      </div>
      <StatusBar />
      <Taskbar />
    </div>
  );
}
